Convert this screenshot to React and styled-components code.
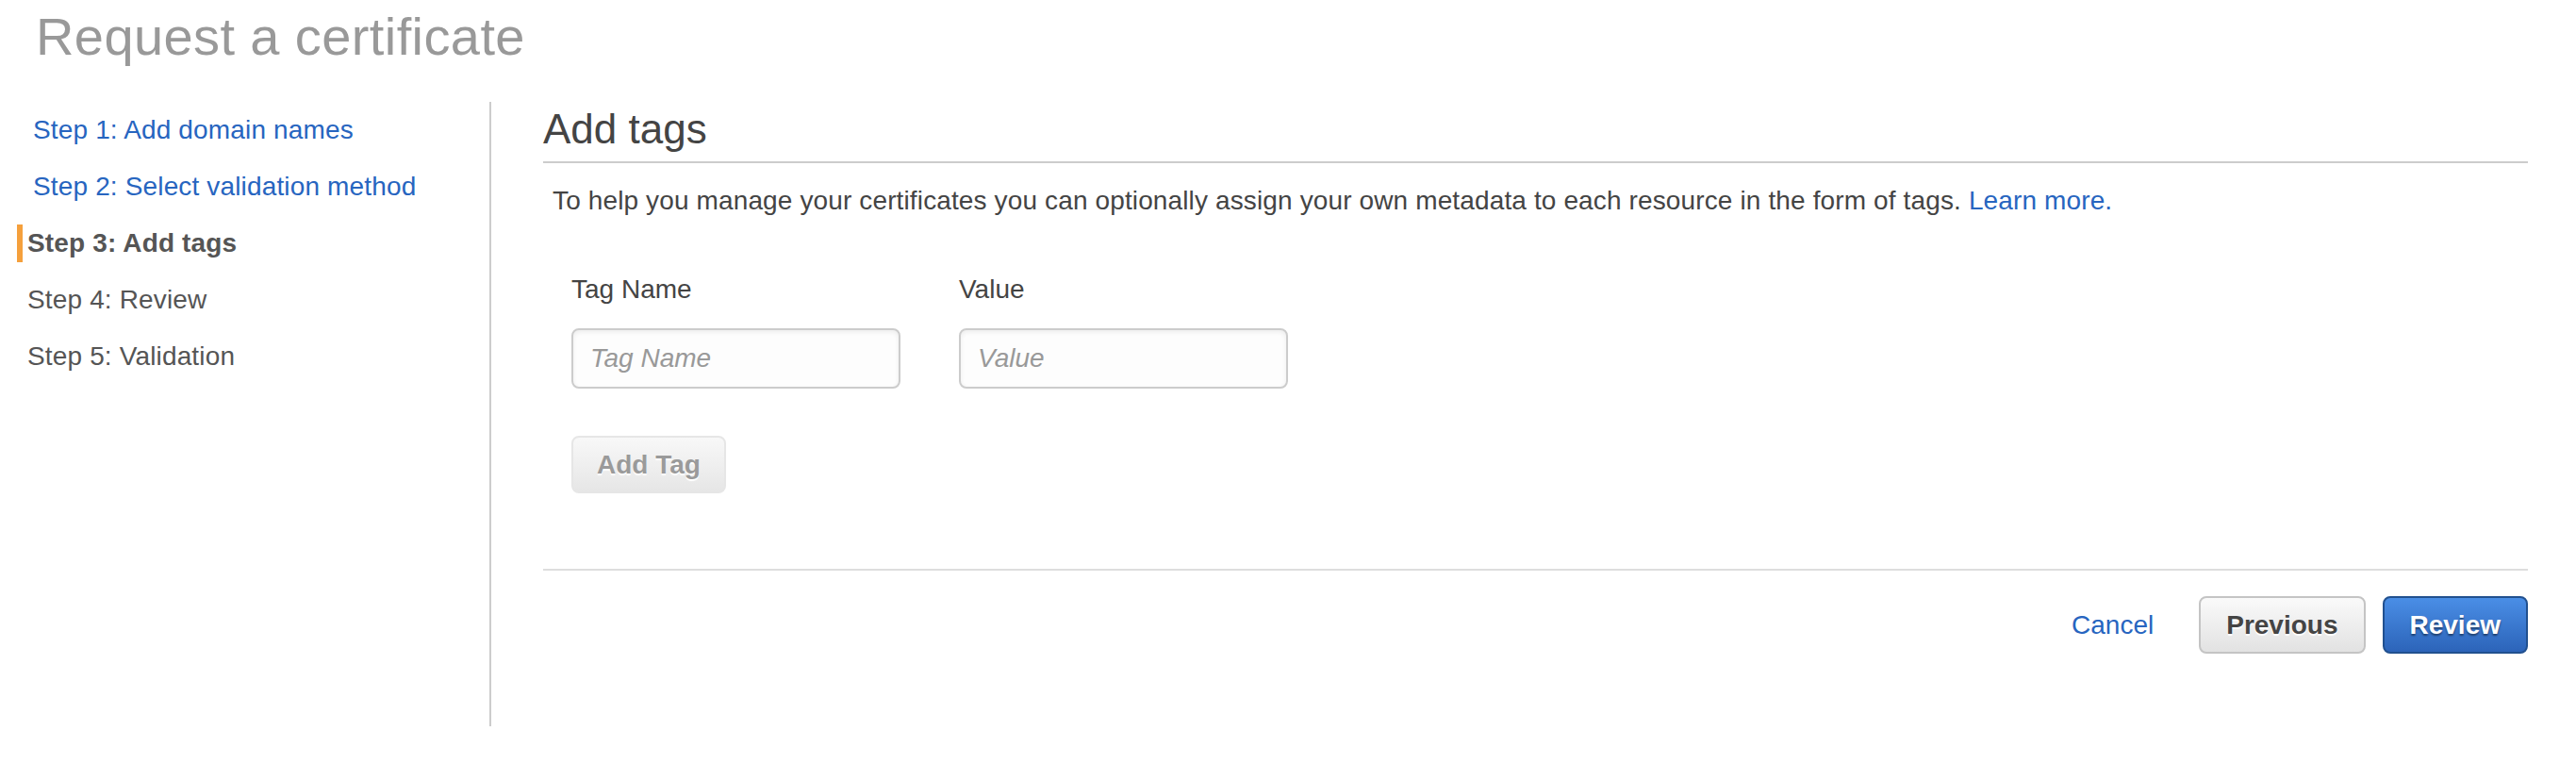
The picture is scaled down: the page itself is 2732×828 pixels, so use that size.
import React from "react";
import styled, { createGlobalStyle, css } from "styled-components";

const GlobalStyle = createGlobalStyle`
  html, body {
    margin: 0;
    padding: 0;
    background: #ffffff;
  }
  body {
    font-family: "Liberation Sans", Arial, Helvetica, sans-serif;
    color: #444444;
  }
  * { box-sizing: border-box; }
`;

const Page = styled.div`
  width: 2732px;
  padding: 7px 51px 0 0;
`;

const PageTitle = styled.h1`
  margin: 0;
  padding-left: 38px;
  font-size: 56px;
  line-height: 64px;
  letter-spacing: 0.4px;
  font-weight: 400;
  color: #999999;
`;

const Layout = styled.div`
  display: flex;
  margin-top: 37px;
  height: 662px;
`;

const Nav = styled.nav`
  width: 521px;
  flex: none;
  border-right: 2px solid #cccccc;
  display: flex;
  flex-direction: column;
`;

const NavItem = styled.div`
  position: relative;
  height: 60px;
  line-height: 60px;
  font-size: 28px;
  letter-spacing: 0.15px;
  padding-left: ${(p) => (p.$link ? "35px" : "29px")};
  color: ${(p) => (p.$link ? "#2765c0" : "#555555")};
  font-weight: ${(p) => (p.$active ? 700 : 400)};
  white-space: nowrap;
  ${(p) =>
    p.$active &&
    css`
      &::before {
        content: "";
        position: absolute;
        left: 18px;
        top: 10px;
        width: 6px;
        height: 40px;
        background: #f5a03c;
      }
    `}
`;

const Main = styled.main`
  flex: 1;
  padding-left: 55px;
  display: flex;
  flex-direction: column;
`;

const SectionHeading = styled.h2`
  margin: 4px 0 0;
  font-size: 44px;
  line-height: 50px;
  font-weight: 400;
  color: #444444;
  padding-bottom: 9px;
  border-bottom: 2px solid #cccccc;
`;

const Description = styled.p`
  margin: 20px 0 0;
  padding-left: 10px;
  font-size: 28px;
  line-height: 40px;
  letter-spacing: 0.13px;
  color: #444444;
`;

const Link = styled.a`
  color: #2765c0;
  text-decoration: none;
  cursor: pointer;
`;

const TagForm = styled.div`
  padding-left: 30px;
  margin-top: 54px;
`;

const FieldRow = styled.div`
  display: flex;
  gap: 62px;
`;

const Field = styled.div`
  width: 349px;
  display: flex;
  flex-direction: column;
`;

const Label = styled.label`
  font-size: 28px;
  line-height: 40px;
  color: #444444;
  margin-bottom: 21px;
`;

const TextInput = styled.input`
  width: 349px;
  height: 64px;
  border: 2px solid #cccccc;
  border-radius: 8px;
  background: #fdfdfd;
  box-shadow: inset 0 2px 5px rgba(0, 0, 0, 0.07);
  padding: 0 18px;
  font-family: "Liberation Sans", Arial, sans-serif;
  font-size: 28px;
  color: #444444;
  outline: none;
  &::placeholder {
    color: #999999;
    font-style: italic;
  }
`;

const Button = styled.button`
  height: 61px;
  border-radius: 8px;
  border: 2px solid;
  padding: 0 ${(p) => p.$pad || 27}px;
  font-family: "Liberation Sans", Arial, sans-serif;
  font-size: 28px;
  font-weight: 700;
  cursor: pointer;
  ${(p) =>
    p.$variant === "primary"
      ? css`
          color: #ffffff;
          border-color: #21508f;
          background: linear-gradient(#4a8ee6, #2c64b9);
          text-shadow: 0 2px 2px rgba(0, 0, 0, 0.45);
        `
      : p.$variant === "disabled"
      ? css`
          color: #9a9a9a;
          border-color: #e6e6e6;
          background: linear-gradient(#f8f8f8, #e6e6e6);
          text-shadow: 0 2px 1px #ffffff;
          cursor: default;
        `
      : css`
          color: #444444;
          border-color: #c4c4c4;
          background: linear-gradient(#fafafa, #e2e2e2);
          text-shadow: 0 2px 1px #ffffff;
        `}
`;

const AddTagRow = styled.div`
  margin-top: 50px;
`;

const Footer = styled.div`
  margin-top: 80px;
  border-top: 2px solid #dddddd;
  padding-top: 27px;
  display: flex;
  justify-content: flex-end;
  align-items: center;
`;

const CancelLink = styled(Link)`
  font-size: 28px;
  margin-right: 48px;
`;

const PrimaryGap = styled.span`
  width: 18px;
`;

const steps = [
  { label: "Step 1: Add domain names", link: true },
  { label: "Step 2: Select validation method", link: true },
  { label: "Step 3: Add tags", active: true },
  { label: "Step 4: Review" },
  { label: "Step 5: Validation" },
];

export default function App() {
  return (
    <>
      <GlobalStyle />
      <Page>
        <PageTitle>Request a certificate</PageTitle>
        <Layout>
          <Nav>
            {steps.map((s) => (
              <NavItem key={s.label} $link={s.link} $active={s.active}>
                {s.label}
              </NavItem>
            ))}
          </Nav>
          <Main>
            <SectionHeading>Add tags</SectionHeading>
            <Description>
              To help you manage your certificates you can optionally assign your own metadata to each resource in the form of tags.{" "}
              <Link>Learn more.</Link>
            </Description>
            <TagForm>
              <FieldRow>
                <Field>
                  <Label>Tag Name</Label>
                  <TextInput placeholder="Tag Name" />
                </Field>
                <Field>
                  <Label>Value</Label>
                  <TextInput placeholder="Value" />
                </Field>
              </FieldRow>
              <AddTagRow>
                <Button $variant="disabled" $pad={25}>Add Tag</Button>
              </AddTagRow>
            </TagForm>
            <Footer>
              <CancelLink>Cancel</CancelLink>
              <Button>Previous</Button>
              <PrimaryGap />
              <Button $variant="primary">Review</Button>
            </Footer>
          </Main>
        </Layout>
      </Page>
    </>
  );
}
